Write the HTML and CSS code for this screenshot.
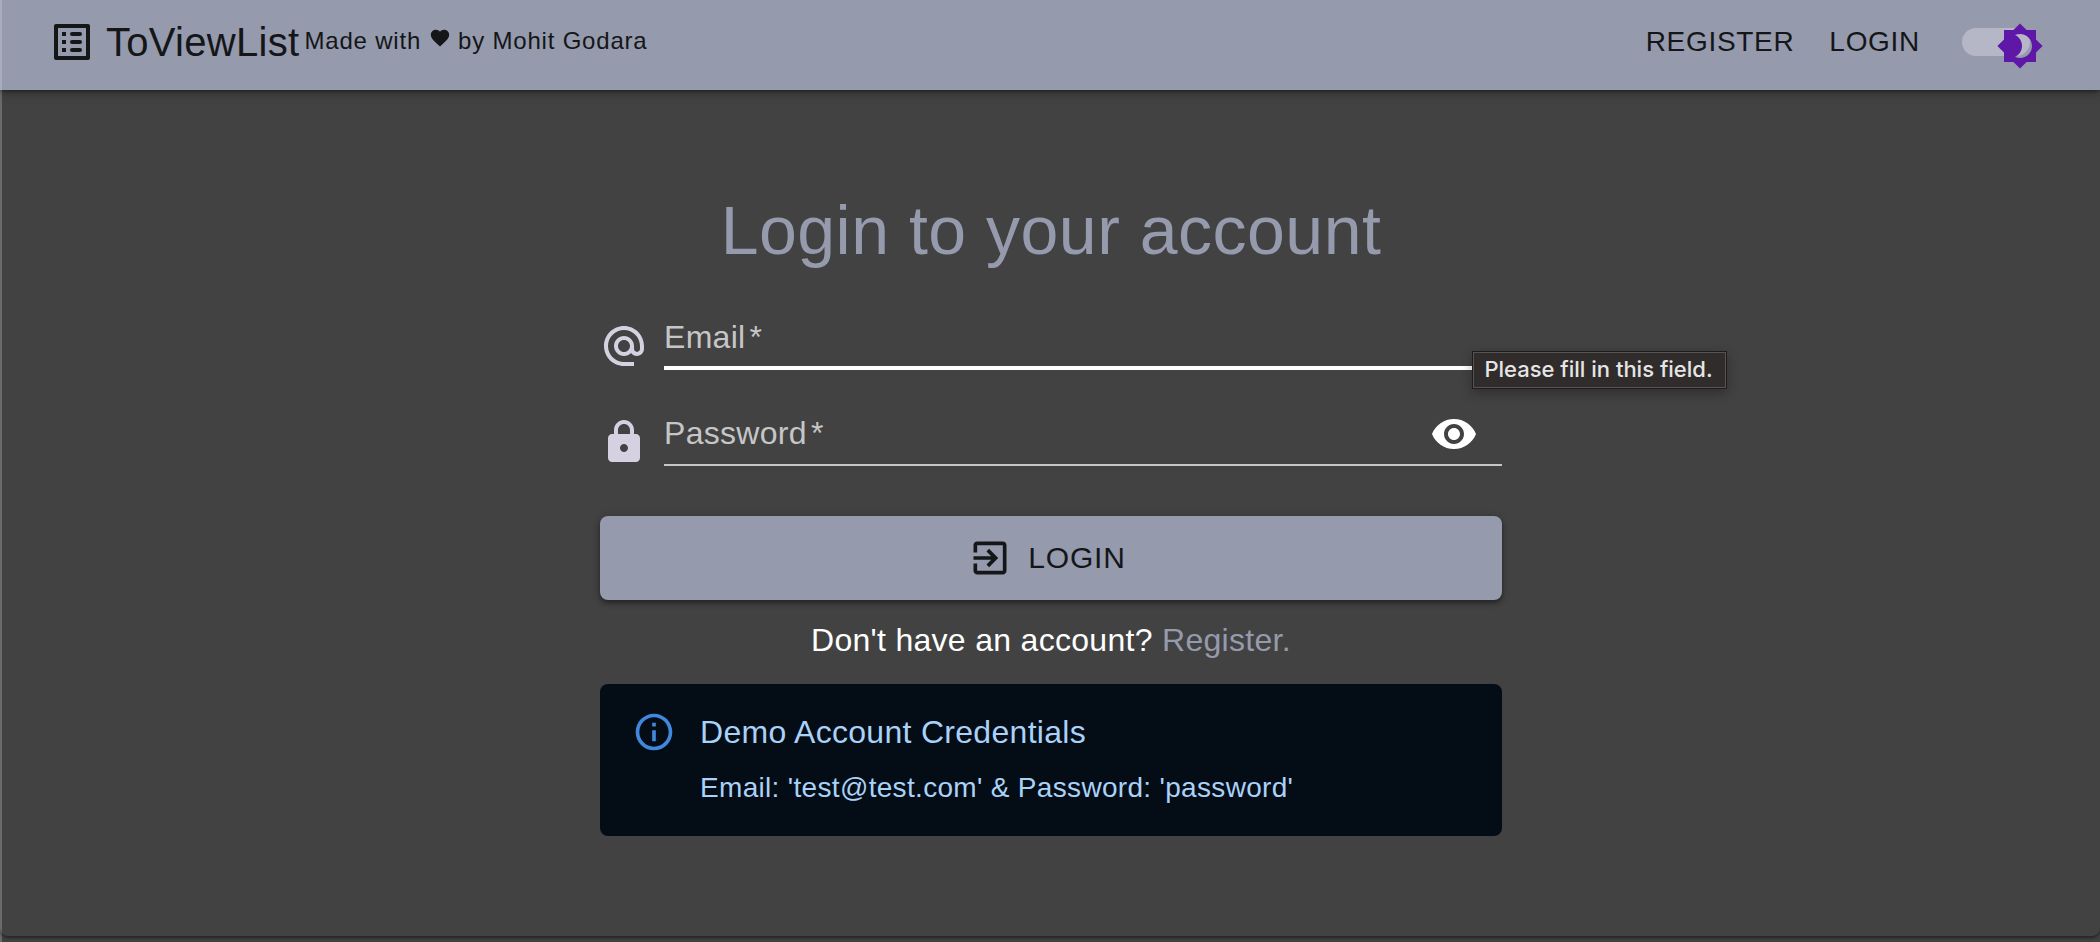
FILE: index.html
```html
<!DOCTYPE html>
<html lang="en">
<head>
<meta charset="utf-8">
<title>ToViewList</title>
<link rel="stylesheet" href="styles.css">
</head>
<body>
<div class="page">
  <header class="bar">
    <svg class="icon logo" viewBox="0 0 24 24"><path fill-rule="evenodd" d="M4 3h16a1 1 0 0 1 1 1v16a1 1 0 0 1-1 1H4a1 1 0 0 1-1-1V4a1 1 0 0 1 1-1zM5 5v14h14V5z"/><path d="M7 7h2v2H7zM7 11h2v2H7zM7 15h2v2H7z"/><rect x="11" y="7" width="6" height="2" rx="1"/><rect x="11" y="11" width="6" height="2" rx="1"/><rect x="11" y="15" width="6" height="2" rx="1"/></svg>
    <span class="brand">ToViewList</span>
    <span class="credit"><span>Made with</span><svg class="heart" viewBox="0 0 24 24"><path d="M12 21.35l-1.45-1.32C5.4 15.36 2 12.28 2 8.5 2 5.42 4.42 3 7.5 3c1.74 0 3.41.81 4.5 2.09C13.09 3.81 14.76 3 16.5 3 19.58 3 22 5.42 22 8.5c0 3.78-3.4 6.86-8.55 11.54L12 21.35z"/></svg><span>by Mohit Godara</span></span>
    <nav class="nav"><a class="nav-link">REGISTER</a><a class="nav-link">LOGIN</a></nav>
    <div class="switch"><svg class="icon thumb" viewBox="0 0 24 24"><path d="M20 8.69V4h-4.69L12 .69 8.69 4H4v4.69L.69 12 4 15.31V20h4.69L12 23.31 15.31 20H20v-4.69L23.31 12 20 8.69zM12 18c-.89 0-1.74-.2-2.5-.55C11.56 16.5 13 14.42 13 12s-1.44-4.5-3.5-5.45C10.26 6.2 11.11 6 12 6c3.31 0 6 2.69 6 6s-2.69 6-6 6z"/></svg></div>
  </header>
  <main class="card">
    <h1 class="heading">Login to your account</h1>
    <div class="field">
      <svg class="icon" viewBox="0 0 24 24"><path d="M12 1.95c-5.52 0-10 4.48-10 10s4.48 10 10 10h5v-2h-5c-4.34 0-8-3.66-8-8s3.66-8 8-8 8 3.66 8 8v1.43c0 .79-.71 1.57-1.5 1.57s-1.5-.78-1.5-1.57v-1.43c0-2.76-2.24-5-5-5s-5 2.24-5 5 2.24 5 5 5c1.38 0 2.64-.56 3.54-1.47.65.89 1.77 1.47 2.96 1.47 1.97 0 3.5-1.6 3.5-3.57v-1.43c0-5.52-4.48-10-10-10zm0 13c-1.66 0-3-1.34-3-3s1.34-3 3-3 3 1.34 3 3-1.34 3-3 3z"/></svg>
      <div class="input input-focus"><label>Email<span class="star">*</span></label><div class="tooltip">Please fill in this field.</div></div>
    </div>
    <div class="field">
      <svg class="icon" viewBox="0 0 24 24"><path d="M18 8h-1V6c0-2.76-2.24-5-5-5S7 3.24 7 6v2H6c-1.1 0-2 .9-2 2v10c0 1.1.9 2 2 2h12c1.1 0 2-.9 2-2V10c0-1.1-.9-2-2-2zm-6 9c-1.1 0-2-.9-2-2s.9-2 2-2 2 .9 2 2-.9 2-2 2zM9 8V6c0-1.66 1.34-3 3-3s3 1.34 3 3v2H9z"/></svg>
      <div class="input"><label>Password<span class="star">*</span></label><svg class="icon eye" viewBox="0 0 24 24"><path d="M12 4.5C7 4.5 2.73 7.61 1 12c1.73 4.39 6 7.5 11 7.5s9.27-3.11 11-7.5c-1.73-4.39-6-7.5-11-7.5zM12 17c-2.76 0-5-2.24-5-5s2.24-5 5-5 5 2.24 5 5-2.24 5-5 5zm0-8c-1.66 0-3 1.34-3 3s1.34 3 3 3 3-1.34 3-3-1.34-3-3-3z"/></svg></div>
    </div>
    <button class="submit"><svg class="icon-sm" viewBox="0 0 24 24"><path d="M10.09 15.59L11.5 17l5-5-5-5-1.41 1.41L12.67 11H3v2h9.67l-2.58 2.59zM19 3H5c-1.11 0-2 .9-2 2v4h2V5h14v14H5v-4H3v4c0 1.1.89 2 2 2h14c1.1 0 2-.9 2-2V5c0-1.1-.9-2-2-2z"/></svg><span>LOGIN</span></button>
    <p class="signup">Don't have an account? <a class="signup-link">Register.</a></p>
    <section class="alert">
      <svg class="icon-sm info" viewBox="0 0 24 24"><path d="M11 7h2v2h-2zM11 11h2v6h-2zM12 2C6.48 2 2 6.48 2 12s4.48 10 10 10 10-4.48 10-10S17.52 2 12 2zm0 18c-4.41 0-8-3.59-8-8s3.59-8 8-8 8 3.59 8 8-3.59 8-8 8z"/></svg>
      <div><div class="alert-title">Demo Account Credentials</div><div class="alert-text">Email: 'test@test.com' &amp; Password: 'password'</div></div>
    </section>
  </main>
</div>
</body>
</html>
```
FILE: styles.css
```css
* { box-sizing: border-box; }
body {
  margin: 0;
  height: 942px;
  overflow: hidden;
  background: #424242;
  font-family: "Liberation Sans", Helvetica, Arial, sans-serif;
  color: #fff;
}
.page {
  height: 942px;
  display: flex;
  flex-direction: column;
  box-shadow: inset 2px 0 #6a6a6a;
}
svg { display: block; flex: none; fill: currentColor; }
.icon { width: 48px; height: 48px; }
.icon-sm { width: 44px; height: 44px; }

.bar {
  flex: none;
  height: 90px;
  padding: 0 70px 6px 46px;
  border-left: 2px solid #a9acbb;
  display: flex;
  align-items: center;
  background: #969aad;
  color: #141618;
  box-shadow: 0 2px 4px -1px rgba(0, 0, 0, .5), 0 4px 10px rgba(0, 0, 0, .2);
  z-index: 1;
}
.brand { margin-left: 10px; font-size: 40px; letter-spacing: .3px; line-height: 64px; }
.credit {
  margin-left: 5px;
  padding-bottom: 2px;
  display: flex;
  align-items: center;
  font-size: 24px;
  letter-spacing: .8px;
  line-height: 40px;
}
.heart { width: 22px; height: 22px; margin: 0 7px 6px 8px; }
.nav { margin-left: auto; display: flex; gap: 35px; }
.nav-link { font-size: 28px; letter-spacing: .7px; line-height: 48px; }
.switch {
  position: relative;
  width: 68px;
  height: 28px;
  margin-left: 42px;
  border-radius: 14px;
  background: #b5b6c6;
}
.thumb { position: absolute; left: 34px; top: -6px; color: #5f17a8; }

.card {
  flex: none;
  height: 846px;
  padding: 100px 598px 0 600px;
  border-radius: 0 0 8px 8px;
  box-shadow: 0 2px 3px rgba(0, 0, 0, .45);
}
.heading {
  margin: 0 0 46px;
  font-size: 68px;
  font-weight: 400;
  letter-spacing: .5px;
  line-height: 80px;
  text-align: center;
  color: #969aad;
}
.field { display: flex; gap: 16px; height: 54px; margin-bottom: 42px; color: #d5d1e0; }
.field .icon { margin-top: 6px; }
.input {
  position: relative;
  flex: 1;
  height: 54px;
  display: flex;
  justify-content: space-between;
  border-bottom: 2px solid #c6c6c6;
  color: #c6c6c6;
}
.input-focus { border-bottom: 4px solid #fff; }
.input label { font-size: 32px; letter-spacing: .3px; line-height: 43px; }
.star { margin-left: 4px; }
.input .eye { margin: -2px 24px 0 0; color: #fff; }
.tooltip {
  position: absolute;
  left: 808px;
  top: 35px;
  width: 255px;
  height: 38px;
  padding-right: 2px;
  border: 1px solid #1d1b1b;
  box-shadow: inset 0 0 0 1px #565353, 0 4px 12px rgba(0, 0, 0, .3);
  background: #302c2c;
  color: #e6e5e5;
  font: 500 22px/35px Inter, sans-serif;
  text-align: center;
  white-space: nowrap;
}
.submit {
  width: 100%;
  height: 84px;
  margin: 50px 0 0;
  padding: 0 8px 0 0;
  border: 0;
  border-radius: 8px;
  display: flex;
  align-items: center;
  justify-content: center;
  gap: 16px;
  background: #969aad;
  color: #141618;
  font: 400 30px/52px "Liberation Sans", Arial, sans-serif;
  letter-spacing: .87px;
  box-shadow: 0 3px 5px rgba(0, 0, 0, .4), 0 1px 10px rgba(0, 0, 0, .15);
}
.signup {
  margin: 16px 0 20px;
  font-size: 32px;
  letter-spacing: .3px;
  line-height: 48px;
  text-align: center;
}
.signup-link { color: #969aad; }
.alert {
  height: 152px;
  padding: 26px 32px;
  display: flex;
  gap: 24px;
  border-radius: 8px;
  background: #040c15;
  color: #a9d2f8;
}
.info { color: #4088db; }
.alert-title { margin-bottom: 14px; font-size: 32px; letter-spacing: .3px; line-height: 44px; }
.alert-text { font-size: 28px; letter-spacing: .32px; line-height: 40px; }
```
